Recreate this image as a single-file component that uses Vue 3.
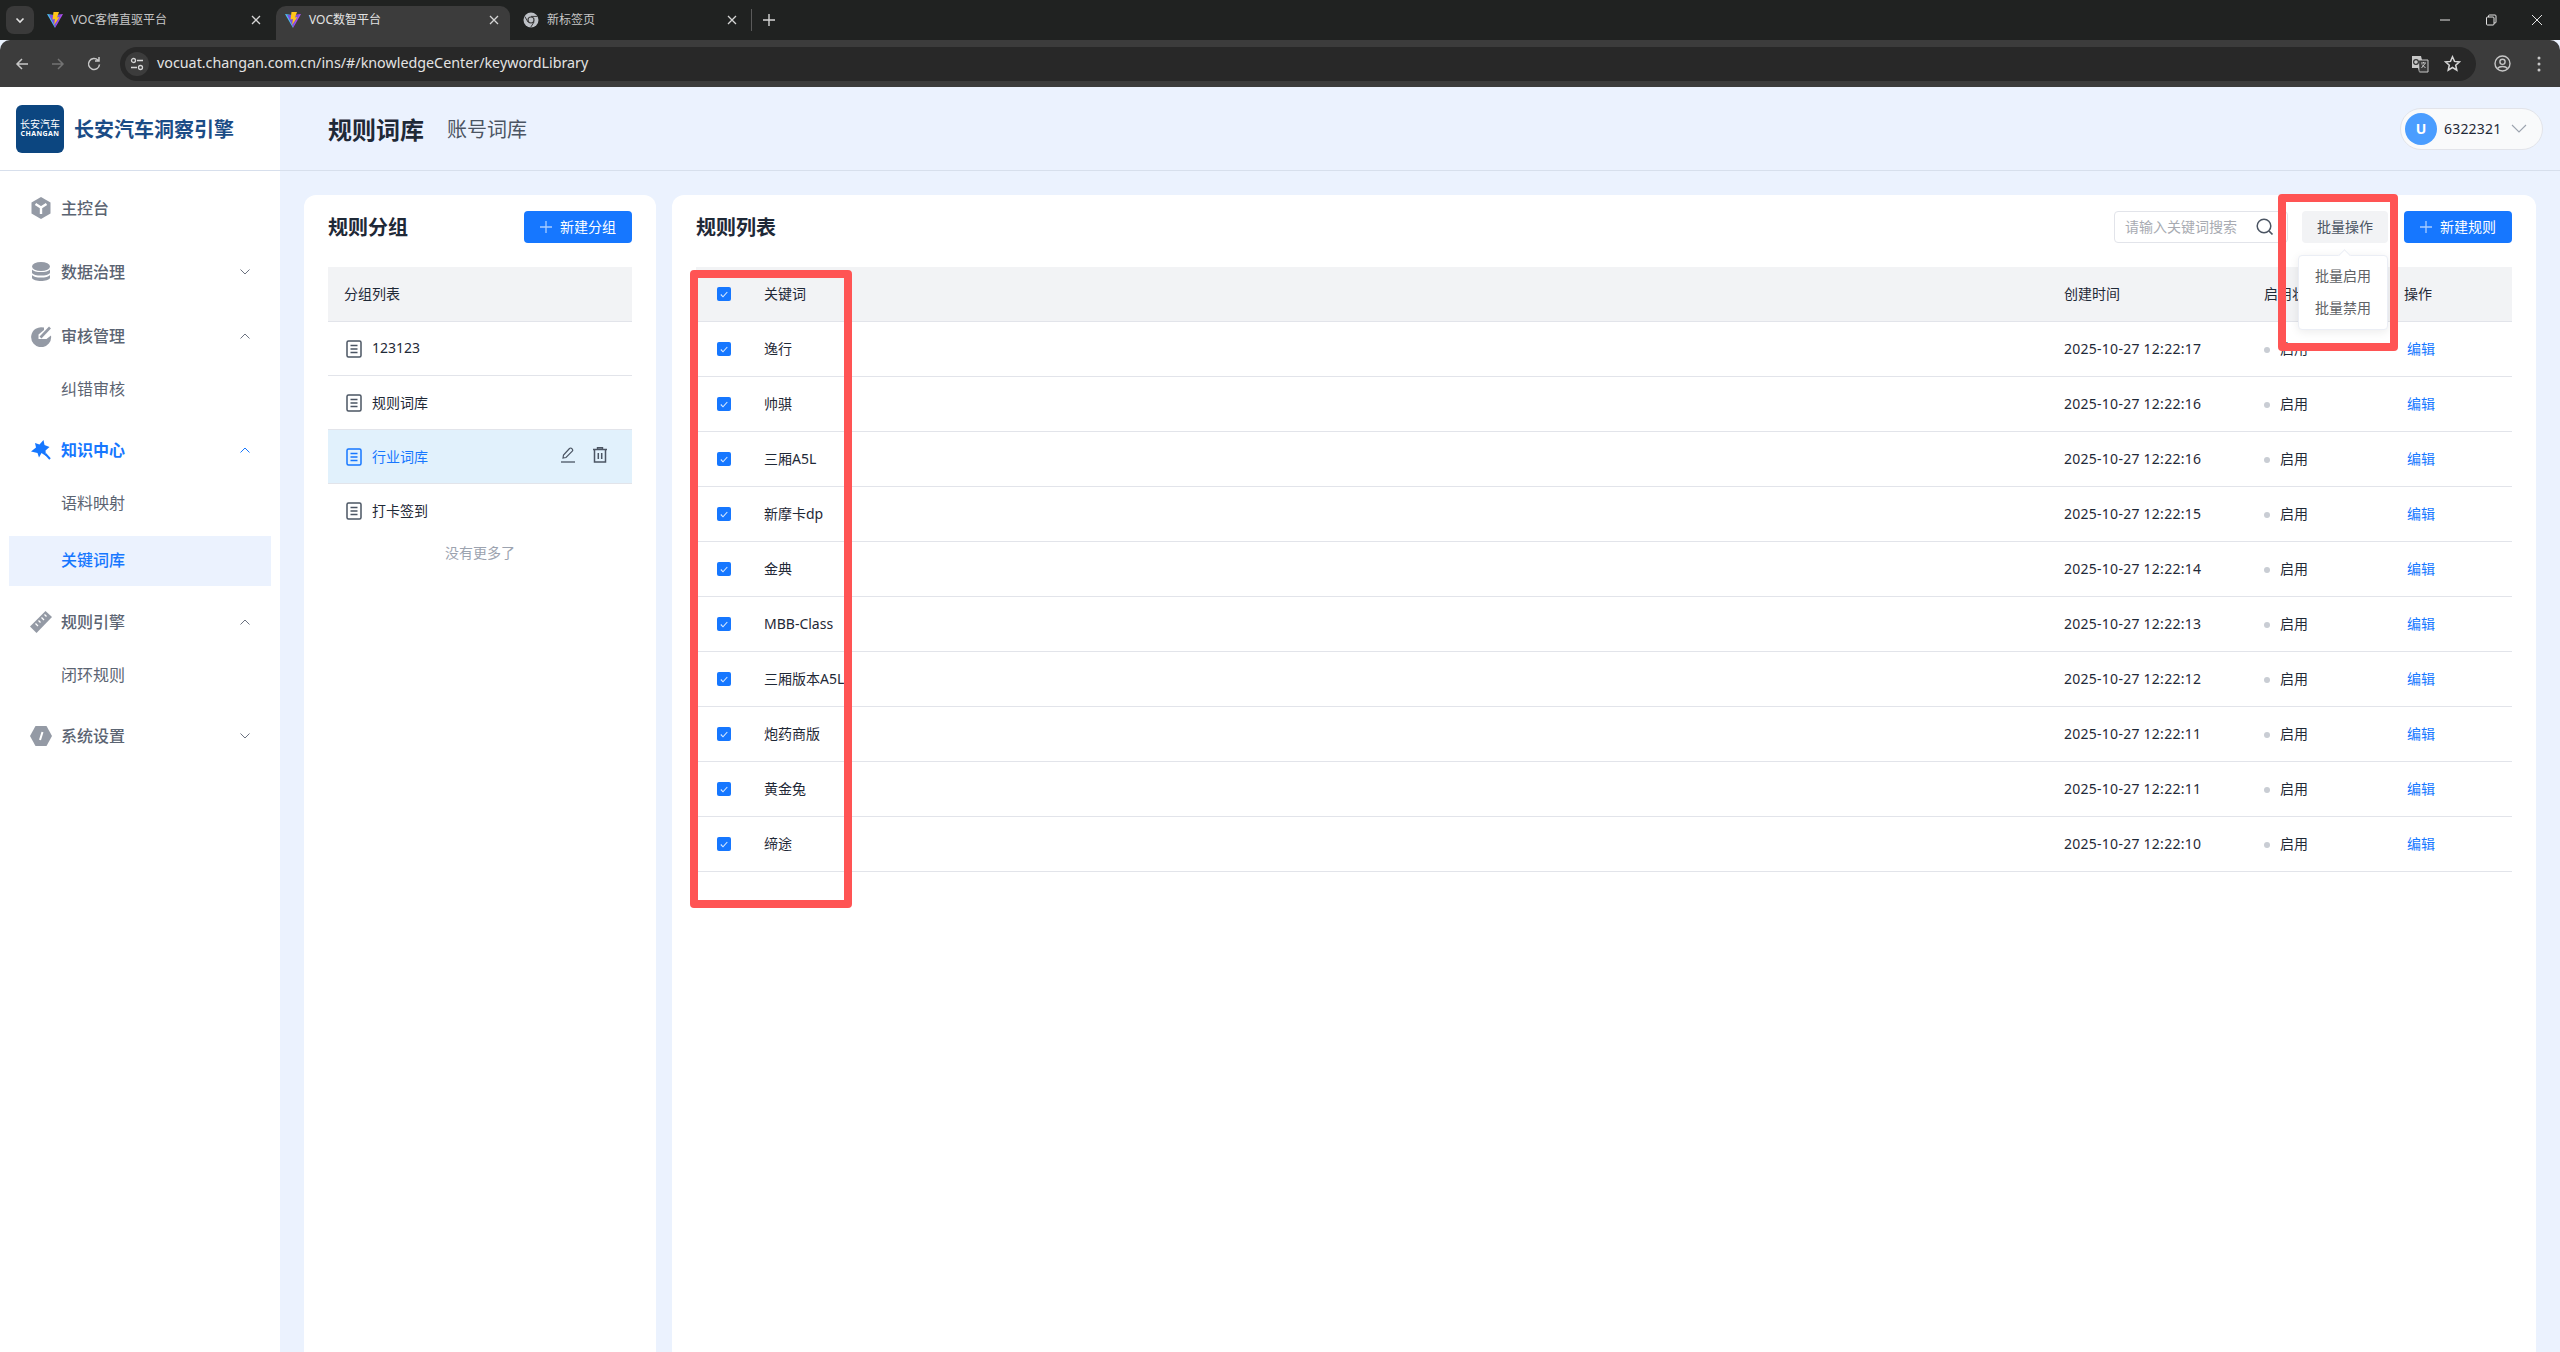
<script setup>
const tabs = [
  { title: 'VOC客情直驱平台', kind: 'vite', active: false },
  { title: 'VOC数智平台', kind: 'vite', active: true },
  { title: '新标签页', kind: 'chrome', active: false },
]
const menu = [
  { label: '主控台', icon: 'cube' },
  { label: '数据治理', icon: 'db', arrow: 'down' },
  { label: '审核管理', icon: 'audit', arrow: 'up', subs: [{ label: '纠错审核' }] },
  { label: '知识中心', icon: 'star', arrow: 'up', active: true, subs: [{ label: '语料映射' }, { label: '关键词库', active: true }] },
  { label: '规则引擎', icon: 'ruler', arrow: 'up', subs: [{ label: '闭环规则' }] },
  { label: '系统设置', icon: 'hex', arrow: 'down' },
]
const groups = [
  { name: '123123' },
  { name: '规则词库' },
  { name: '行业词库', active: true },
  { name: '打卡签到' },
]
const rows = [
  ['逸行', '2025-10-27 12:22:17'],
  ['帅骐', '2025-10-27 12:22:16'],
  ['三厢A5L', '2025-10-27 12:22:16'],
  ['新摩卡dp', '2025-10-27 12:22:15'],
  ['金典', '2025-10-27 12:22:14'],
  ['MBB-Class', '2025-10-27 12:22:13'],
  ['三厢版本A5L', '2025-10-27 12:22:12'],
  ['炮药商版', '2025-10-27 12:22:11'],
  ['黄金兔', '2025-10-27 12:22:11'],
  ['缔途', '2025-10-27 12:22:10'],
]
</script>

<template>
  <div class="app">
    <div class="tabbar">
      <div class="tabsearch">
        <svg width="12" height="12" viewBox="0 0 12 12"><path d="M2.5 4.5 6 8l3.5-3.5" fill="none" stroke="#e3e3e3" stroke-width="1.6" /></svg>
      </div>
      <div v-for="t in tabs" :key="t.title" class="tab" :class="{ on: t.active }">
        <svg v-if="t.kind === 'vite'" class="fav" width="16" height="16" viewBox="0 0 16 16">
          <path d="M0 2 7 3 8 16Z" fill="#4cc2f2" />
          <path d="M16 2 9 3 8 16Z" fill="#b14ff0" />
          <path d="M2 3 14 3 8 14.500Z" fill="#7a4fe0" />
          <path d="M6.500 0 12 0 10 5.500 12.500 5 7 13 8 7 5.500 7.500Z" fill="#ffc517" />
        </svg>
        <svg v-else class="fav" width="16" height="16" viewBox="0 0 16 16">
          <circle cx="8" cy="8" r="7.500" fill="#bdc1c6" />
          <circle cx="8" cy="8" r="3.600" fill="#3a3a3a" />
          <circle cx="8" cy="8" r="2.400" fill="#bdc1c6" />
          <path d="M8 4.400h6.500M5 10 1.800 4.500M11 10 7.600 15.400" stroke="#3a3a3a" stroke-width="1" fill="none" />
        </svg>
        <span class="tabtitle">{{ t.title }}</span>
        <svg width="10" height="10" viewBox="0 0 10 10"><path d="M1 1l8 8M9 1l-8 8" stroke="#d5d5d5" stroke-width="1.300" /></svg>
      </div>
      <i class="tabsep"></i>
      <svg class="newtab" width="12" height="12" viewBox="0 0 12 12"><path d="M6 0v12M0 6h12" stroke="#d5d5d5" stroke-width="1.400" /></svg>
      <div class="winctl">
        <svg width="12" height="12" viewBox="0 0 12 12"><path d="M1 6h10" stroke="#e3e3e3" stroke-width="1" /></svg>
        <svg width="12" height="12" viewBox="0 0 12 12"><rect x="1.500" y="3" width="7.500" height="8" rx="1" fill="none" stroke="#e3e3e3" /><path d="M3.500 3V2a1 1 0 0 1 1-1H10a1 1 0 0 1 1 1v6a1 1 0 0 1-1 1H9" fill="none" stroke="#e3e3e3" /></svg>
        <svg width="12" height="12" viewBox="0 0 12 12"><path d="M1 1l10 10M11 1 1 11" stroke="#e3e3e3" stroke-width="1" /></svg>
      </div>
    </div>
    <div class="toolbar">
      <div class="navbtns">
        <svg width="16" height="16" viewBox="0 0 16 16"><path d="M14 8H3M8 3 3 8l5 5" fill="none" stroke="#c7c7c7" stroke-width="1.500" /></svg>
        <svg width="16" height="16" viewBox="0 0 16 16"><path d="M2 8h11M8 3l5 5-5 5" fill="none" stroke="#737373" stroke-width="1.500" /></svg>
        <svg width="16" height="16" viewBox="0 0 16 16"><path d="M13.500 8.500A5.500 5.500 0 1 1 12 4.200M13 1v4H9" fill="none" stroke="#c7c7c7" stroke-width="1.500" /></svg>
      </div>
      <div class="omni">
        <div class="siteinfo">
          <svg width="14" height="14" viewBox="0 0 14 14"><circle cx="3.500" cy="3.500" r="2" fill="none" stroke="#d5d5d5" stroke-width="1.300" /><path d="M7 3.500h6M1 10.500h6" stroke="#d5d5d5" stroke-width="1.300" /><circle cx="10.500" cy="10.500" r="2" fill="none" stroke="#d5d5d5" stroke-width="1.300" /></svg>
        </div>
        <span class="url">vocuat.changan.com.cn/ins/#/knowledgeCenter/keywordLibrary</span>
        <span class="omniright">
          <svg width="18" height="18" viewBox="0 0 18 18"><path d="M1 1h9l1 4h6v12H8l-1-4H1Z" fill="#c7c7c7" /><path d="M8 5h9v12H8.500" fill="#3a3a3a" stroke="#c7c7c7" /><circle cx="5" cy="7" r="2.400" fill="none" stroke="#333" stroke-width="1.200" /><path d="M10 8h5M12.500 7v1M14 8.500 10.500 13M11 9.500l3.500 3.500" stroke="#c7c7c7" /></svg>
          <svg width="17" height="17" viewBox="0 0 17 17"><path d="M8.500 1.800l2 4.600 5 .5-3.800 3.300 1.100 4.900-4.300-2.600-4.300 2.600 1.100-4.900L1.500 6.900l5-.5Z" fill="none" stroke="#d5d5d5" stroke-width="1.500" /></svg>
        </span>
      </div>
      <svg class="profile" width="17" height="17" viewBox="0 0 17 17"><circle cx="8.500" cy="8.500" r="7.500" fill="none" stroke="#c7c7c7" stroke-width="1.400" /><circle cx="8.500" cy="6.800" r="2.600" fill="none" stroke="#c7c7c7" stroke-width="1.400" /><path d="M3.500 13.500c2-2.600 8-2.600 10 0" fill="none" stroke="#c7c7c7" stroke-width="1.400" /></svg>
      <svg class="kebab" width="4" height="16" viewBox="0 0 4 16"><circle cx="2" cy="2" r="1.500" fill="#c7c7c7" /><circle cx="2" cy="8" r="1.500" fill="#c7c7c7" /><circle cx="2" cy="14" r="1.500" fill="#c7c7c7" /></svg>
    </div>

    <div class="page">
      <aside class="side">
        <div class="brand">
          <div class="logo">
            <span class="logo-cn">长安汽车</span>
            <span class="logo-en">CHANGAN</span>
          </div>
          <span class="brandname">长安汽车洞察引擎</span>
        </div>
        <nav class="menu">
          <div v-for="m in menu" :key="m.label" class="group" :class="{ hassubs: m.subs }">
            <div class="item" :class="{ on: m.active }">
              <span class="ico">
                <svg v-if="m.icon === 'cube'" width="20" height="22" viewBox="0 0 20 22"><path d="M10 0 19.500 5.500v11L10 22 .5 16.500v-11Z" fill="#949aa5" /><path d="M4.500 7 10 10.500 15.500 7M10 10.500V17" fill="none" stroke="#fff" stroke-width="2.400" /></svg>
                <svg v-else-if="m.icon === 'db'" width="20" height="20" viewBox="0 0 20 20"><ellipse cx="10" cy="4.500" rx="9" ry="4.500" fill="#949aa5" /><path d="M1 7.500c2 3.400 16 3.400 18 0v3.500c-1.600 3.400-16.400 3.400-18 0ZM1 13c2 3.400 16 3.400 18 0v3c-1.600 4-16.400 4-18 0Z" fill="#949aa5" /></svg>
                <svg v-else-if="m.icon === 'audit'" width="21" height="21" viewBox="0 0 21 21"><path d="M13 1.600A10 10 0 1 0 20 9.500l-4.500 3.500H7.500v-4.500L13 4Z" fill="#949aa5" /><path d="M9.500 11.500 19 1.500" stroke="#949aa5" stroke-width="2.600" /></svg>
                <svg v-else-if="m.icon === 'star'" width="20" height="20" viewBox="0 0 20 20"><path d="M12.500 0 13.500 5 18.500 7 14.500 10.500 15 16 10.500 13 8 17.500 6.500 13 0 11.500 5 7.500 4 3 8.500 4.500Z" fill="#1677ff" /><path d="M14.500 14l4.500 5" stroke="#1677ff" stroke-width="2" /></svg>
                <svg v-else-if="m.icon === 'ruler'" width="22" height="22" viewBox="0 0 22 22"><path d="M15.500 0 22 6 6.500 22 0 15.500Z" fill="#949aa5" /><path d="M5.500 12.500 8 15M8.500 9.500l2 2M11.500 6.500 14 9M14.500 3.500l2 2" stroke="#fff" stroke-width="1.300" /></svg>
                <svg v-else width="22" height="20" viewBox="0 0 22 20"><path d="M5.500 0h11L22 10l-5.500 10h-11L0 10Z" fill="#949aa5" /><path d="M12.500 6 10 14" stroke="#fff" stroke-width="2" /></svg>
              </span>
              <span class="itemlabel">{{ m.label }}</span>
              <svg v-if="m.arrow" class="chev" width="10" height="6" viewBox="0 0 10 6">
                <path :d="m.arrow === 'up' ? 'M.5 5.500 5 1l4.500 4.500' : 'M.5.5 5 5 9.500.5'" fill="none" :stroke="m.active ? '#1677ff' : '#6b7280'" stroke-width="1" />
              </svg>
            </div>
            <div v-if="m.subs" class="subs">
              <div v-for="s in m.subs" :key="s.label" class="sub" :class="{ on: s.active }">{{ s.label }}</div>
            </div>
          </div>
        </nav>
      </aside>

      <main class="main">
        <header class="head">
          <div class="headtabs">
            <span class="h-on">规则词库</span>
            <span class="h-off">账号词库</span>
          </div>
          <div class="user">
            <span class="avatar">U</span>
            <span class="uid">6322321</span>
            <svg width="16" height="9" viewBox="0 0 16 9"><path d="M1 1l7 7 7-7" fill="none" stroke="#9ca3af" stroke-width="1.100" /></svg>
          </div>
        </header>

        <div class="content">
          <section class="card left">
            <div class="cardhead">
              <h2>规则分组</h2>
              <button class="primary">
                <svg width="12" height="12" viewBox="0 0 12 12"><path d="M6 0v12M0 6h12" stroke="#a9cdff" stroke-width="1.300" /></svg>
                新建分组
              </button>
            </div>
            <div class="ghead">分组列表</div>
            <div v-for="g in groups" :key="g.name" class="grow" :class="{ on: g.active }">
              <svg width="16" height="18" viewBox="0 0 16 18"><rect x="1" y="1" width="14" height="16" rx="1.500" fill="none" stroke="currentColor" stroke-width="1.500" /><path d="M4.500 5.500h7M4.500 9h7M4.500 12.500h7" stroke="currentColor" stroke-width="1.500" /></svg>
              <span class="gname">{{ g.name }}</span>
              <span v-if="g.active" class="gops">
                <svg width="14" height="16" viewBox="0 0 14 16"><path d="M2 11 2.500 8 8.500 1.500a1.500 1.500 0 0 1 2.200 0l.6.6a1.500 1.500 0 0 1 0 2.100L5 10.500Z" fill="none" stroke="#4b5563" stroke-width="1.200" /><path d="M0 15h14" stroke="#4b5563" stroke-width="1.300" /></svg>
                <svg width="14" height="16" viewBox="0 0 14 16"><path d="M0 2.500h14M4.500 2.500V.8h5v1.700" fill="none" stroke="#4b5563" stroke-width="1.400" /><path d="M1.500 3v12h11V3" fill="none" stroke="#4b5563" stroke-width="1.500" /><path d="M5.300 6v6M8.700 6v6" stroke="#4b5563" stroke-width="1.500" /></svg>
              </span>
            </div>
            <div class="nomore">没有更多了</div>
          </section>

          <section class="card right">
            <div class="cardhead">
              <h2>规则列表</h2>
              <div class="tools">
                <div class="search">
                  <span class="ph">请输入关键词搜索</span>
                  <svg width="18" height="18" viewBox="0 0 18 18"><circle cx="8" cy="8" r="6.800" fill="none" stroke="#4b5563" stroke-width="1.500" /><path d="M13 13l3.500 3.500" stroke="#4b5563" stroke-width="1.700" /></svg>
                </div>
                <button class="ghost">批量操作</button>
                <button class="primary">
                  <svg width="12" height="12" viewBox="0 0 12 12"><path d="M6 0v12M0 6h12" stroke="#a9cdff" stroke-width="1.300" /></svg>
                  新建规则
                </button>
              </div>
            </div>
            <div class="trow thead">
              <span class="cbcell"><i class="cb"><svg width="8" height="7" viewBox="0 0 8 7"><path d="M.8 3.500 3 5.800 7.300 1" fill="none" stroke="#d7e8ff" stroke-width="1.100" /></svg></i></span>
              <span>关键词</span>
              <span>创建时间</span>
              <span>启用状态</span>
              <span>操作</span>
            </div>
            <div v-for="r in rows" :key="r[0]" class="trow">
              <span class="cbcell"><i class="cb"><svg width="8" height="7" viewBox="0 0 8 7"><path d="M.8 3.500 3 5.800 7.300 1" fill="none" stroke="#d7e8ff" stroke-width="1.100" /></svg></i></span>
              <span class="kw">{{ r[0] }}</span>
              <span class="date">{{ r[1] }}</span>
              <span class="status"><i class="dot"></i>启用</span>
              <span class="edit">编辑</span>
            </div>
          </section>
        </div>
      </main>
    </div>

    <div class="pop">
      <i class="poparrow"></i>
      <div>批量启用</div>
      <div>批量禁用</div>
    </div>
    <div class="mark mark-a"></div>
    <div class="mark mark-b"></div>
  </div>
</template>

<style>
html, body { margin: 0; padding: 0; }
</style>

<style scoped>
.app {
  position: relative;
  width: 2560px;
  height: 1352px;
  overflow: hidden;
  font-family: "Noto Sans", "Noto Sans CJK SC", sans-serif;
  font-size: 14px;
  color: #1f2937;
  background: #ebf2fe;
}
.tabbar {
  height: 40px;
  background: #202221;
  display: flex;
  align-items: flex-end;
  padding-left: 6px;
  box-sizing: border-box;
  color: #e3e3e3;
  font-size: 12px;
}
.tabsearch {
  width: 28px;
  height: 28px;
  margin-bottom: 6px;
  background: #3a3a3a;
  border-radius: 8px;
  display: flex;
  align-items: center;
  justify-content: center;
}
.tab {
  width: 234px;
  height: 34px;
  margin-left: 4px;
  padding: 0 11px 6px 9px;
  box-sizing: border-box;
  display: flex;
  align-items: center;
  border-radius: 10px 10px 0 0;
  color: #c7c7c7;
}
.tab.on { background: #3c3c3c; color: #e3e3e3; }
.tabtitle { flex: 1; margin-left: 8px; line-height: 16px; }
.tabsep { width: 1px; height: 22px; background: #5a5a5a; margin: 0 0 9px 3px; }
.newtab { margin: 0 0 14px 11px; }
.winctl {
  margin-left: auto;
  display: flex;
  gap: 34px;
  padding-right: 17px;
  height: 40px;
  align-items: center;
}
.toolbar {
  height: 47px;
  background: #3c3c3c;
  border-radius: 10px 10px 0 0;
  display: flex;
  align-items: center;
  box-sizing: border-box;
}
.navbtns { display: flex; gap: 20px; padding-left: 14px; width: 120px; box-sizing: border-box; }
.omni {
  width: 2356px;
  height: 34px;
  border-radius: 17px;
  background: #282828;
  display: flex;
  align-items: center;
  color: #e3e3e3;
  box-sizing: border-box;
  padding-left: 5px;
}
.siteinfo {
  width: 24px;
  height: 24px;
  border-radius: 12px;
  background: #3c3c3c;
  display: flex;
  align-items: center;
  justify-content: center;
}
.url { margin-left: 8px; font-size: 14.3px; line-height: 20px; padding-bottom: 2px; }
.omniright { margin-left: auto; display: flex; align-items: center; gap: 15px; padding-right: 15px; }
.profile { margin-left: 18px; }
.kebab { margin-left: 26px; }

.page { display: flex; height: 1265px; }
.side { width: 280px; flex: none; background: #fff; }
.brand {
  height: 84px;
  display: flex;
  align-items: center;
  padding-left: 16px;
  box-sizing: border-box;
  border-bottom: 1px solid #d7dfec;
}
.logo {
  width: 48px;
  height: 48px;
  border-radius: 6px;
  background: #0c4680;
  color: #fff;
  display: flex;
  flex-direction: column;
  align-items: center;
  justify-content: center;
  line-height: 1;
}
.logo-cn { font-size: 10px; line-height: 11px; }
.logo-en { font-size: 7px; line-height: 8px; font-weight: 700; letter-spacing: .4px; }
.brandname { margin-left: 10px; font-size: 20px; font-weight: 700; color: #1b4c86; }
.menu { padding-top: 12px; }
.group { margin-bottom: 14px; }
.group.hassubs { margin-bottom: 10px; }
.item {
  height: 50px;
  display: flex;
  align-items: center;
  padding-left: 30px;
  font-size: 16px;
  font-weight: 500;
  color: #5b6472;
  position: relative;
}
.item.on { color: #1677ff; font-weight: 700; }
.ico { width: 22px; height: 22px; display: flex; align-items: center; justify-content: center; }
.itemlabel { margin-left: 9px; padding-bottom: 2px; }
.chev { position: absolute; left: 240px; top: 22px; }
.subs { margin-top: 4px; display: flex; flex-direction: column; gap: 7px; }
.sub {
  height: 50px;
  line-height: 48px;
  margin: 0 9px;
  padding-left: 52px;
  font-size: 16px;
  color: #5b6472;
}
.sub.on { background: #ebf2fe; color: #1677ff; font-weight: 500; margin-bottom: 1px; }

.main { flex: 1; display: flex; flex-direction: column; min-width: 0; }
.head {
  height: 84px;
  flex: none;
  box-sizing: border-box;
  border-bottom: 1px solid #d7dfec;
  display: flex;
  align-items: center;
  justify-content: space-between;
  padding: 0 17px 0 48px;
}
.headtabs { display: flex; align-items: center; gap: 23px; }
.h-on { font-size: 24px; font-weight: 700; color: #1f2937; }
.h-off { font-size: 20px; color: #4b5563; }
.user {
  width: 143px;
  height: 42px;
  box-sizing: border-box;
  border: 1px solid #e2e4ea;
  border-radius: 21px;
  background: #f9fafb;
  display: flex;
  align-items: center;
  padding-left: 4px;
}
.avatar {
  width: 32px;
  height: 32px;
  border-radius: 50%;
  background: #4a9dff;
  color: #fff;
  font-weight: 700;
  text-align: center;
  line-height: 32px;
}
.uid { margin: 0 10px 0 7px; color: #1f2937; letter-spacing: .2px; }
.content { flex: 1; display: flex; gap: 16px; padding: 24px 24px 0; min-height: 0; }
.card {
  background: #fff;
  border-radius: 12px 12px 0 0;
  padding: 16px 24px 0;
  box-sizing: border-box;
}
.left { width: 352px; flex: none; }
.right { flex: 1; min-width: 0; }
.cardhead { display: flex; justify-content: space-between; align-items: center; height: 32px; margin-bottom: 24px; }
h2 { margin: 0 0 2px; font-size: 20px; font-weight: 700; color: #1f2937; }
button {
  font: inherit;
  height: 32px;
  border: 0;
  border-radius: 4px;
  padding: 0 0 2px;
  display: flex;
  align-items: center;
  justify-content: center;
}
.primary { width: 108px; background: #1677ff; color: #fff; gap: 8px; }
.primary svg { margin-top: 2px; }
.ghost { width: 86px; background: #f2f3f5; color: #4b5563; }
.tools { display: flex; align-items: center; }
.search {
  width: 174px;
  height: 32px;
  box-sizing: border-box;
  border: 1px solid #e2e4ea;
  border-radius: 4px;
  display: flex;
  align-items: center;
  padding: 0 13px 0 10px;
  justify-content: space-between;
  margin-right: 14px;
}
.ph { color: #a8abb2; padding-bottom: 2px; white-space: nowrap; }
.search + .ghost { margin-right: 16px; }
.ghead {
  height: 55px;
  background: #f2f3f5;
  border-bottom: 1px solid #e2e4ea;
  box-sizing: border-box;
  padding-left: 16px;
  line-height: 54px;
}
.grow {
  height: 54px;
  box-sizing: border-box;
  border-bottom: 1px solid #e2e4ea;
  display: flex;
  align-items: center;
  padding-left: 18px;
  color: #4b5563;
}
.grow:nth-last-child(2) { border-bottom: 0; }
.grow.on { background: #e1f1fc; color: #1677ff; }
.gname { margin-left: 10px; color: #1f2937; padding-bottom: 2px; }
.grow.on .gname { color: #1677ff; }
.gops { margin-left: auto; display: flex; gap: 18px; padding-right: 25px; margin-top: -3px; }
.nomore { text-align: center; color: #9ca3af; line-height: 20px; margin-top: 5px; }
.trow {
  display: grid;
  grid-template-columns: 68px 1300px 200px 140px 108px;
  height: 55px;
  align-items: center;
  border-bottom: 1px solid #e2e4ea;
  box-sizing: border-box;
}
.trow > span:not(.cbcell) { padding-bottom: 2px; }
.thead { background: #f2f3f5; }
.date { letter-spacing: .26px; }
.cbcell { padding-left: 21px; display: flex; }
.cb {
  width: 14px;
  height: 14px;
  border-radius: 2px;
  background: #1677ff;
  display: flex;
  align-items: center;
  justify-content: center;
}
.status { display: flex; align-items: center; }
.dot { width: 6px; height: 6px; border-radius: 50%; background: #c9cdd4; margin: 4px 10px 0 0; }
.edit { color: #1677ff; padding-left: 3px; }
.pop {
  position: absolute;
  left: 2298px;
  top: 255px;
  width: 90px;
  height: 75px;
  box-sizing: border-box;
  background: #fff;
  border: 1px solid #ebeef5;
  border-radius: 4px;
  box-shadow: 0 2px 10px rgba(0, 0, 0, .08);
  padding-top: 4px;
  text-align: center;
  color: #606266;
  line-height: 32px;
}
.poparrow {
  position: absolute;
  left: 41px;
  top: -5px;
  width: 8px;
  height: 8px;
  background: #fff;
  border: 1px solid #ebeef5;
  border-width: 1px 0 0 1px;
  transform: rotate(45deg);
}
.mark {
  position: absolute;
  box-sizing: border-box;
  border: 8px solid #ff5454;
  border-radius: 4px;
}
.mark-a { left: 2278px; top: 194px; width: 120px; height: 157px; }
.mark-b { left: 690px; top: 270px; width: 162px; height: 638px; }
</style>
